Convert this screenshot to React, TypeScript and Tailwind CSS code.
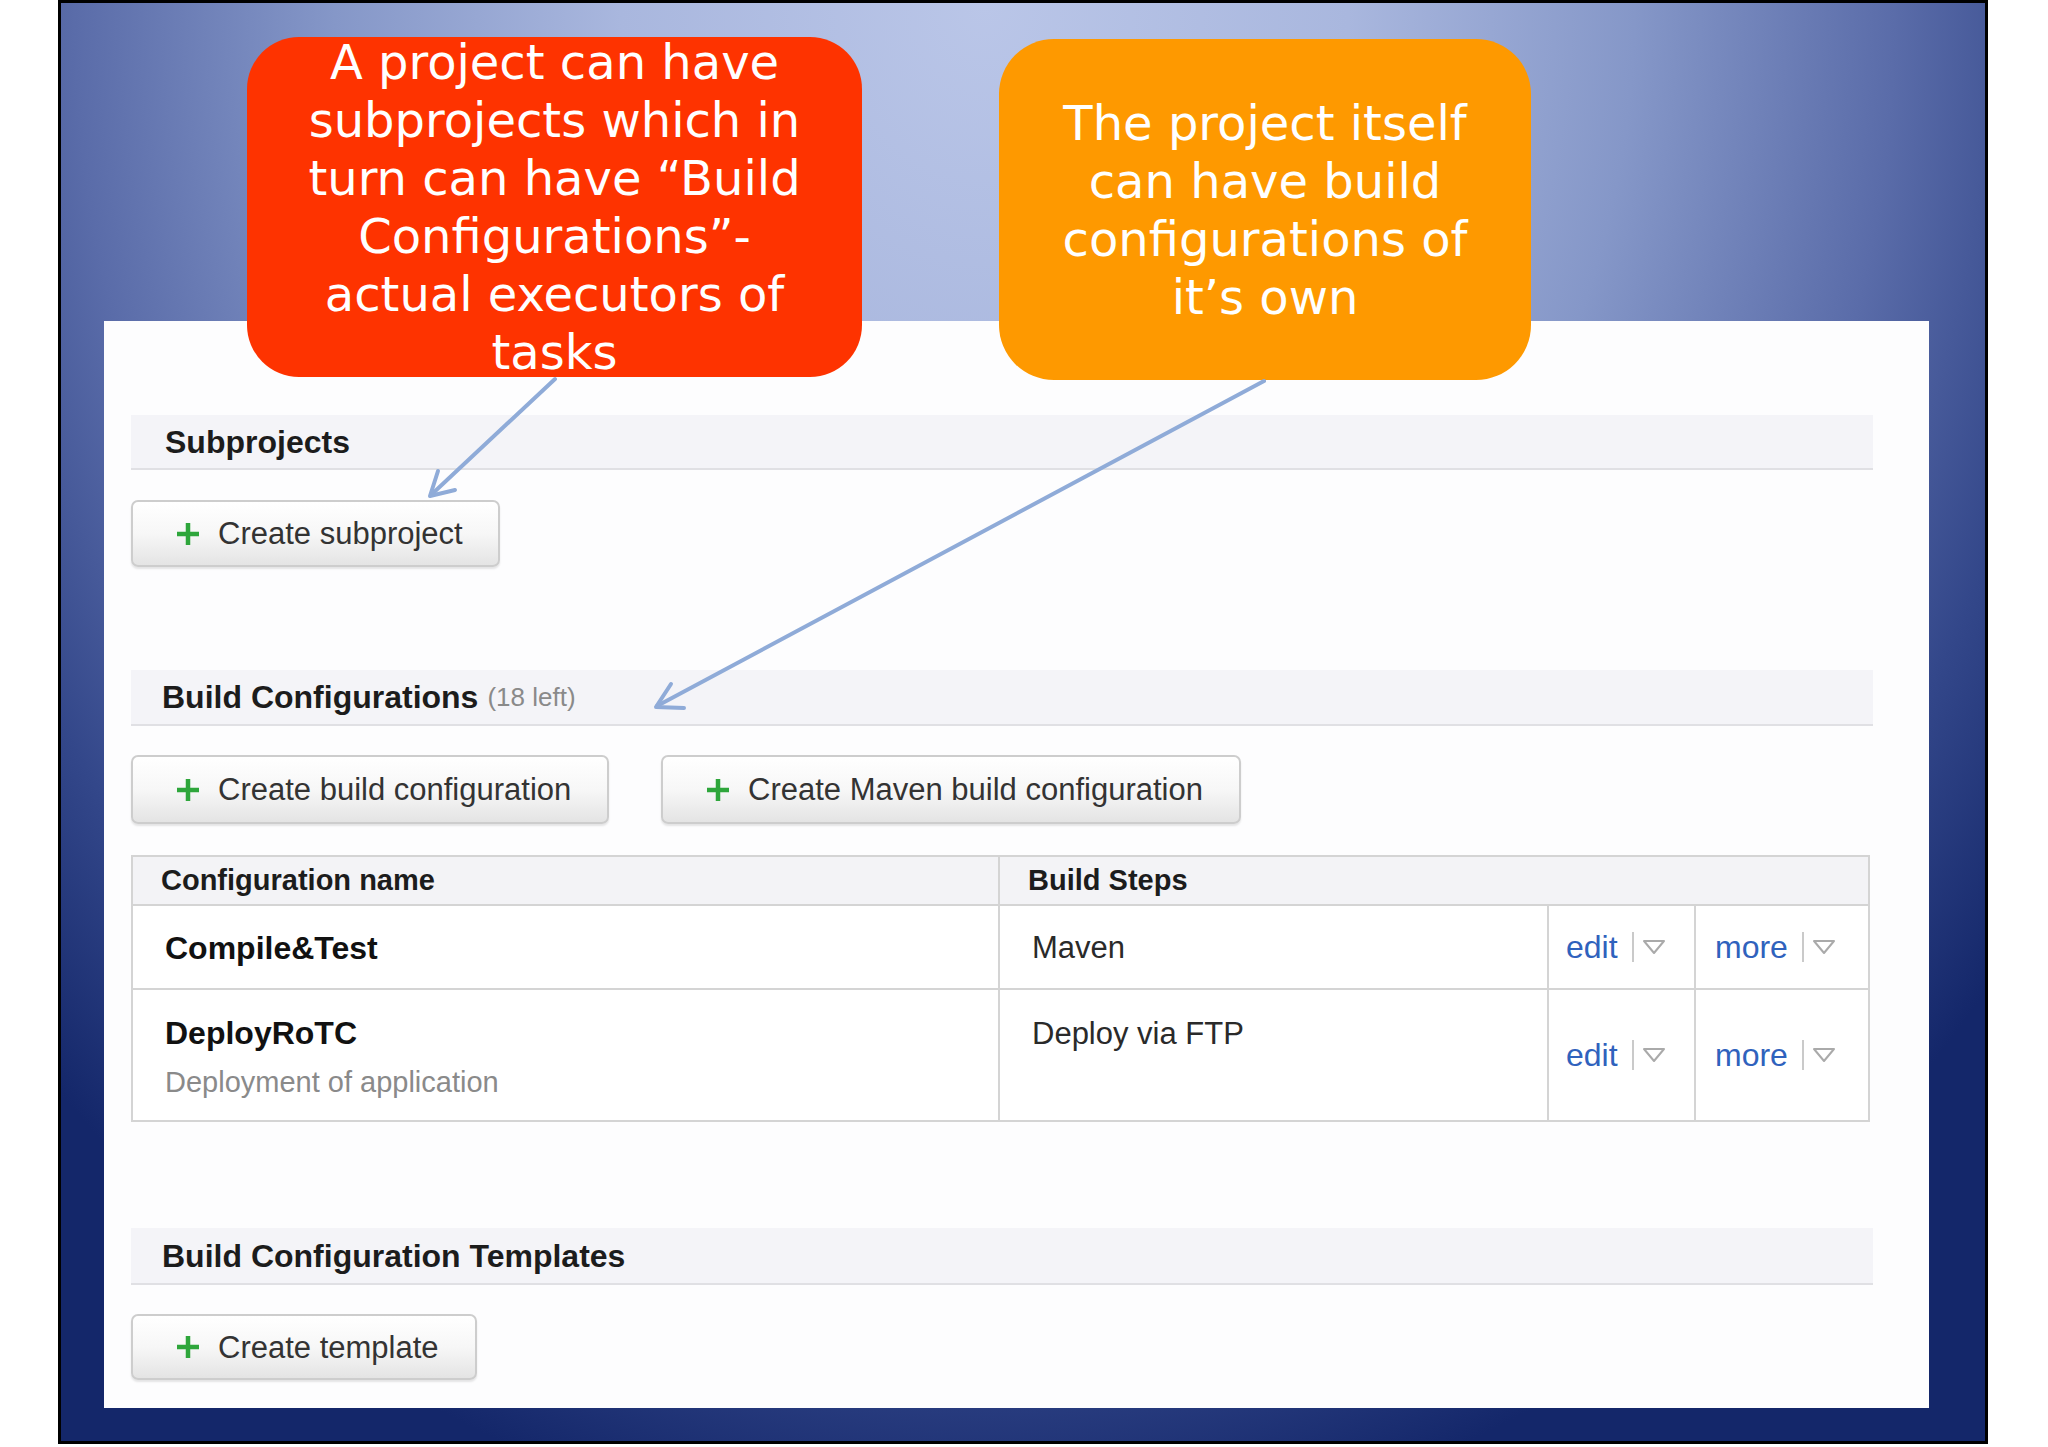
import React from 'react';

const PlusIcon: React.FC = () => (
    <svg width="24" height="24" viewBox="0 0 24 24" className="flex-shrink-0">
        <path d="M12 1v22M1 12h22" stroke="#2ea63b" strokeWidth="4.5" fill="none" />
    </svg>
);

interface ActionButtonProps {
    label: string;
    width: string;
    height: string;
}

const ActionButton: React.FC<ActionButtonProps> = ({ label, width, height }) => (
    <div
        className={`${width} ${height} flex items-center pl-[43px] border-2 border-[#cdcdcd] rounded-[7px] bg-gradient-to-b from-white via-[#f7f7f7] to-[#e4e4e4] shadow-[0_2px_2px_rgba(0,0,0,0.1)]`}
    >
        <PlusIcon />
        <span className="ml-[18px] text-[31px] text-[#333] leading-none">{label}</span>
    </div>
);

const SectionBand: React.FC<{ height: string; pad: string; children: React.ReactNode }> = ({ height, pad, children }) => (
    <div className={`${height} ${pad} w-full flex items-center bg-[#f4f4f8] border-b-2 border-[#e0e0e4]`}>
        {children}
    </div>
);

const DropCaret: React.FC = () => (
    <span className="flex items-center ml-[14px] gap-[8px]">
        <span className="w-[2px] h-[30px] bg-[#cacaca]" />
        <svg width="24" height="16" viewBox="0 0 24 16">
            <path d="M2 2h20L12 14z" fill="#fff" stroke="#aaa" strokeWidth="2" strokeLinejoin="round" />
        </svg>
    </span>
);

const LinkCell: React.FC<{ label: string; width: string; pad: string; last?: boolean }> = ({ label, width, pad, last }) => (
    <div className={`${width} ${pad} flex items-center ${last ? '' : 'border-r-2 border-[#d4d4d4]'}`}>
        <span className="text-[32px] text-[#2f62bd] leading-none">{label}</span>
        <DropCaret />
    </div>
);

const App: React.FC = () => {
    return (
        <div className="w-[2048px] h-[1447px] bg-white relative overflow-hidden font-['Liberation_Sans',Arial,sans-serif]">
            {/* Slide */}
            <div className="ml-[58px] w-[1930px] h-[1444px] border-[3px] border-black bg-[radial-gradient(ellipse_1300px_1550px_at_48%_0%,#bac6e8_0%,#a9b7de_28%,#8597c8_50%,#5a6ca9_70%,#33478a_85%,#14276a_100%)]">
                <div className="ml-[43px] mt-[318px] w-[1825px] h-[1087px] bg-[#fdfdfe] pt-[94px] pl-[27px]">
                    <div className="w-[1742px] flex flex-col items-start">
                        {/* Subprojects */}
                        <SectionBand height="h-[55px]" pad="pl-[34px]">
                            <span className="text-[32px] font-bold text-[#1c1c1c]">Subprojects</span>
                        </SectionBand>
                        <div className="mt-[30px]">
                            <ActionButton label="Create subproject" width="w-[369px]" height="h-[67px]" />
                        </div>

                        {/* Build configurations */}
                        <div className="mt-[103px] w-full">
                            <SectionBand height="h-[56px]" pad="pl-[31px]">
                                <span className="text-[32px] font-bold text-[#1c1c1c]">Build Configurations</span>
                                <span className="ml-[9px] text-[26px] text-[#8a8a8a]">(18 left)</span>
                            </SectionBand>
                        </div>
                        <div className="mt-[29px] flex gap-[52px]">
                            <ActionButton label="Create build configuration" width="w-[478px]" height="h-[69px]" />
                            <ActionButton label="Create Maven build configuration" width="w-[580px]" height="h-[69px]" />
                        </div>

                        {/* Table */}
                        <div className="mt-[31px] w-[1739px] border-2 border-[#d4d4d4] bg-white">
                            <div className="h-[49px] flex bg-[#f3f3f6] border-b-2 border-[#d4d4d4]">
                                <div className="w-[867px] pl-[28px] flex items-center border-r-2 border-[#d4d4d4]">
                                    <span className="text-[29px] font-bold text-[#1c1c1c]">Configuration name</span>
                                </div>
                                <div className="flex-1 pl-[28px] flex items-center">
                                    <span className="text-[29px] font-bold text-[#1c1c1c]">Build Steps</span>
                                </div>
                            </div>
                            <div className="h-[84px] flex border-b-2 border-[#d4d4d4]">
                                <div className="w-[867px] pl-[32px] pt-[2px] flex items-center border-r-2 border-[#d4d4d4]">
                                    <span className="text-[32px] font-bold text-[#111]">Compile&amp;Test</span>
                                </div>
                                <div className="w-[549px] pl-[32px] pt-[2px] flex items-center border-r-2 border-[#d4d4d4]">
                                    <span className="text-[31px] text-[#2a2a2a]">Maven</span>
                                </div>
                                <LinkCell label="edit" width="w-[147px]" pad="pl-[17px]" />
                                <LinkCell label="more" width="w-[172px]" pad="pl-[19px]" last />
                            </div>
                            <div className="h-[130px] flex">
                                <div className="w-[867px] pl-[32px] pt-[25px] flex flex-col border-r-2 border-[#d4d4d4]">
                                    <span className="text-[32px] leading-[37px] font-bold text-[#111]">DeployRoTC</span>
                                    <span className="mt-[12px] text-[29px] leading-[37px] text-[#8a8a8a]">Deployment of application</span>
                                </div>
                                <div className="w-[549px] pl-[32px] pt-[25px] border-r-2 border-[#d4d4d4]">
                                    <span className="text-[31px] leading-[37px] text-[#2a2a2a]">Deploy via FTP</span>
                                </div>
                                <LinkCell label="edit" width="w-[147px]" pad="pl-[17px]" />
                                <LinkCell label="more" width="w-[172px]" pad="pl-[19px]" last />
                            </div>
                        </div>

                        {/* Templates */}
                        <div className="mt-[106px] w-full">
                            <SectionBand height="h-[57px]" pad="pl-[31px]">
                                <span className="text-[32px] font-bold text-[#1c1c1c]">Build Configuration Templates</span>
                            </SectionBand>
                        </div>
                        <div className="mt-[29px]">
                            <ActionButton label="Create template" width="w-[346px]" height="h-[66px]" />
                        </div>
                    </div>
                </div>
            </div>

            {/* Callout bubbles */}
            <div className="absolute left-[247px] top-[37px] w-[615px] h-[340px] rounded-[52px] bg-[#fe3300] flex flex-col justify-center items-center text-white text-center font-['DejaVu_Sans',Verdana,sans-serif] text-[48px] leading-[58px]">
                <span>A project can have</span>
                <span>subprojects which in</span>
                <span>turn can have “Build</span>
                <span>Configurations”-</span>
                <span>actual executors of</span>
                <span>tasks</span>
            </div>
            <div className="absolute left-[999px] top-[39px] w-[532px] h-[341px] rounded-[55px] bg-[#fe9900] flex flex-col justify-center items-center text-white text-center font-['DejaVu_Sans',Verdana,sans-serif] text-[48px] leading-[58px]">
                <span>The project itself</span>
                <span>can have build</span>
                <span>configurations of</span>
                <span>it’s own</span>
            </div>

            {/* Arrows */}
            <svg className="absolute left-0 top-0 pointer-events-none" width="2048" height="1447" viewBox="0 0 2048 1447">
                <g stroke="#8fabd8" strokeWidth="4" fill="none" strokeLinecap="round" strokeLinejoin="round">
                    <line x1="555" y1="379" x2="431" y2="495" />
                    <polyline points="455,490 430,496 438,471" />
                    <line x1="1264" y1="381" x2="657" y2="706" />
                    <polyline points="684,708 656,707 671,684" />
                </g>
            </svg>
        </div>
    );
};

export default App;
